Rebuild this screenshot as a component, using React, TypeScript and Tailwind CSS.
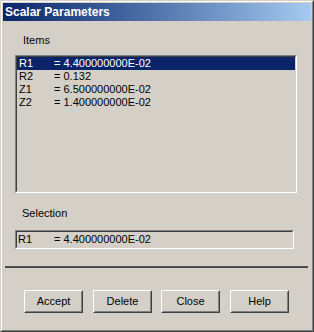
const items = [
  { name: 'R1', value: '= 4.400000000E-02', selected: true },
  { name: 'R2', value: '= 0.132' },
  { name: 'Z1', value: '= 6.500000000E-02' },
  { name: 'Z2', value: '= 1.400000000E-02' },
];

const buttons = [
  { label: 'Accept', cls: 'ml-[21px]' },
  { label: 'Delete', cls: 'ml-[10px]' },
  { label: 'Close', cls: 'ml-[9px]' },
  { label: 'Help', cls: 'ml-[10px]' },
];

function Sunken({ className, children }: { className: string; children: React.ReactNode }) {
  return (
    <div className={`border border-t-[#808080] border-l-[#808080] border-b-white border-r-white ${className}`}>
      <div className="h-full border border-t-[#404040] border-l-[#404040] border-b-[#d4d0c8] border-r-[#d4d0c8]">
        {children}
      </div>
    </div>
  );
}

export default function App() {
  return (
    <div className="w-[314px] h-[332px] bg-[#d4d0c8] text-[11px] leading-[13px] text-black font-['Liberation_Sans',Arial,sans-serif] select-none">
      {/* window frame */}
      <div className="h-full border border-t-[#d4d0c8] border-l-[#d4d0c8] border-b-[#404040] border-r-[#404040]">
        <div className="h-full border border-t-white border-l-white border-b-[#808080] border-r-[#808080] p-px flex flex-col">
          {/* Title bar */}
          <div className="h-[18px] flex items-center pl-[2px] bg-gradient-to-r from-[#0a246a] to-[#a6caf0]">
            <span className="text-white font-bold text-[12px]">Scalar Parameters</span>
          </div>

          {/* Body */}
          <div className="flex flex-col">
            <div className="pt-[13px] pl-[20px] h-[26px]">Items</div>

            <Sunken className="mt-[8px] ml-[12px] w-[282px] h-[138px]">
              <div className="flex flex-col">
                {items.map((it) => (
                  <div
                    key={it.name}
                    className={`h-[13px] flex items-center pl-[2px] ${it.selected ? 'bg-[#0a246a] text-white' : ''}`}
                  >
                    <span className="w-[35px]">{it.name}</span>
                    <span>{it.value}</span>
                  </div>
                ))}
              </div>
            </Sunken>

            <div className="mt-[14px] pl-[19px] h-[13px]">Selection</div>

            <Sunken className="mt-[10px] ml-[12px] w-[279px] h-[19px]">
              <div className="h-full flex items-center pl-px">
                <span className="w-[36px]">R1</span>
                <span>= 4.400000000E-02</span>
              </div>
            </Sunken>

            <div className="mt-[17px] ml-[2px] w-[303px] flex flex-col">
              <div className="h-px bg-[#555555]" />
              <div className="h-px bg-[#404040]" />
            </div>

            <div className="mt-[22px] flex">
              {buttons.map((b) => (
                <button
                  key={b.label}
                  className={`${b.cls} w-[59px] h-[23px] border border-t-white border-l-white border-b-[#404040] border-r-[#404040] bg-[#d4d0c8]`}
                >
                  <div className="h-full flex items-center justify-center border border-t-[#d4d0c8] border-l-[#d4d0c8] border-b-[#808080] border-r-[#808080]">
                    {b.label}
                  </div>
                </button>
              ))}
            </div>
          </div>
        </div>
      </div>
    </div>
  );
}
